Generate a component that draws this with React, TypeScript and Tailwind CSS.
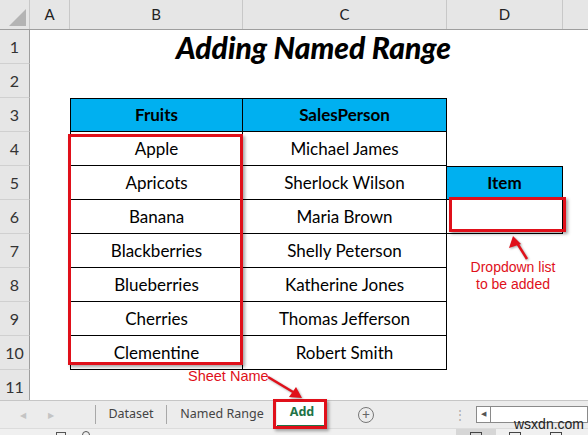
import React from "react";

const cols = ["A", "B", "C", "D"];
const colW = ["w-[40px]", "w-[173px]", "w-[204px]", "w-[116px]"];

const fruits = ["Apple", "Apricots", "Banana", "Blackberries", "Blueberries", "Cherries", "Clementine"];
const people = [
  "Michael James",
  "Sherlock Wilson",
  "Maria Brown",
  "Shelly Peterson",
  "Katherine Jones",
  "Thomas Jefferson",
  "Robert Smith",
];

const cellFont = { fontFamily: "Lato, 'Open Sans', sans-serif" };

function RowNum({ n, h = "h-[34px]" }: { n: number; h?: string }) {
  return (
    <div
      className={`w-[30px] ${h} shrink-0 bg-[#e6e6e6] border-r border-r-[#9e9e9e] border-b border-b-[#d0d0d0] flex items-center justify-center text-[16px] text-[#333]`}
      style={cellFont}
    >
      {n}
    </div>
  );
}

function Row({ n, children }: { n: number; children?: React.ReactNode }) {
  return (
    <div className="flex h-[34px]">
      <RowNum n={n} />
      {children}
    </div>
  );
}

export default function App() {
  return (
    <div className="relative w-[588px] h-[435px] overflow-hidden bg-white text-black" style={cellFont}>
      {/* column headers */}
      <div className="flex h-[30px] bg-[#e6e6e6] border-b border-b-[#9e9e9e]">
        <div className="relative w-[30px] shrink-0 border-r border-r-[#c8c8c8]">
          <div className="absolute right-[3px] bottom-[3px] w-0 h-0 border-l-[17px] border-l-transparent border-b-[17px] border-b-[#b4b4b4]" />
        </div>
        {cols.map((c, i) => (
          <div
            key={c}
            className={`${colW[i]} shrink-0 border-r border-r-[#c8c8c8] flex items-center justify-center text-[15px] text-[#222]`}
          >
            {c}
          </div>
        ))}
        <div className="flex-1" />
      </div>

      {/* row 1: title */}
      <Row n={1}>
        <div className="w-[40px]" />
        <div className="w-[493px] flex items-center justify-center pr-[6px]">
          <span className="text-[30px] font-black italic leading-none">Adding Named Range</span>
        </div>
      </Row>
      <Row n={2} />

      {/* row 3: table header */}
      <Row n={3}>
        <div className="w-[40px]" />
        <div className="w-[173px] bg-[#00b0f0] border border-black flex items-center justify-center text-[17px] font-bold">
          Fruits
        </div>
        <div className="w-[204px] bg-[#00b0f0] border-y border-r border-black flex items-center justify-center text-[17px] font-bold">
          SalesPerson
        </div>
      </Row>

      {fruits.map((f, i) => (
        <Row key={f} n={i + 4}>
          <div className="w-[40px]" />
          <div className="w-[173px] border-x border-b border-black flex items-center justify-center text-[17px]">
            {f}
          </div>
          <div className="w-[204px] border-r border-b border-black flex items-center justify-center text-[17px]">
            {people[i]}
          </div>
          {i === 0 && <div className="w-[116px]" />}
          {i === 1 && (
            <div className="w-[116px] bg-[#00b0f0] border-y border-r border-black flex items-center justify-center text-[17px] font-bold">
              Item
            </div>
          )}
          {i === 2 && <div className="w-[116px] border-r border-b border-black" />}
        </Row>
      ))}

      <div className="flex h-[31px]">
        <RowNum n={11} h="h-[34px]" />
      </div>

      {/* sheet tabs */}
      <div
        className="absolute left-0 top-[400px] w-full h-[28px] bg-[#ececec] border-t border-t-[#c6c6c6] flex items-center text-[12.5px] text-[#444]"
        style={{ fontFamily: "'Noto Sans', 'Open Sans', sans-serif" }}
      >
        <div className="w-[95px] flex items-center gap-[22px] pl-[20px] text-[#c4c4c4] text-[8px]">
          <span>◀</span>
          <span>▶</span>
        </div>
        <div className="w-px h-[19px] bg-[#a8a8a8]" />
        <div className="w-[70px] text-center">Dataset</div>
        <div className="w-px h-[19px] bg-[#a8a8a8]" />
        <div className="w-[110px] text-center">Named Range</div>
        <div className="w-[50px] h-[26px] mt-[-2px] bg-white flex items-center justify-center text-[#217346] font-bold border-b-2 border-b-[#217346]">
          Add
        </div>
        <div className="ml-[31px] w-[16px] h-[16px] rounded-full border border-[#777] flex items-center justify-center text-[#666] text-[14px] leading-none">
          +
        </div>
        <div className="ml-[80px] text-[#aaa] text-[12px] leading-none">⋮</div>
        <div className="ml-[10px] flex-1 h-[17px] bg-white border border-[#8a8a8a] flex">
          <div className="w-[14px] border-r border-r-[#8a8a8a] flex items-center justify-center text-[7px] text-[#555]">
            ◀
          </div>
        </div>
      </div>

      {/* status bar */}
      <div className="absolute left-0 top-[428px] w-full h-[7px] bg-[#f0f0f0] border-t border-t-[#dcdcdc]">
        <div className="absolute left-[56px] top-[3px] w-[10px] h-[6px] border border-[#555]" />
        <div className="absolute left-[82px] top-[2px] w-[8px] h-[6px] border border-[#555] rounded-t-sm" />
        <div className="absolute left-[456px] top-0 w-[40px] h-[7px] bg-[#d6d6d6]" />
        <div className="absolute left-[470px] top-[3px] w-[12px] h-[6px] border border-[#444]" />
        <div className="absolute left-[509px] top-[3px] w-[12px] h-[6px] border border-[#444]" />
        <div className="absolute left-[550px] top-[3px] w-[12px] h-[6px] border border-[#444]" />
      </div>

      {/* watermark */}
      <div
        className="absolute left-[514px] top-[417px] text-[14px] text-[#222] leading-none"
        style={{ fontFamily: "'Liberation Sans', Arial, sans-serif" }}
      >
        wsxdn.com
      </div>

      {/* red annotation boxes */}
      <div className="absolute left-[68px] top-[134px] w-[175px] h-[231px] border-[3px] border-[#e0101a] shadow-[2px_2px_3px_rgba(0,0,0,0.35)]" />
      <div className="absolute left-[449px] top-[197px] w-[117px] h-[35px] border-[3px] border-[#e0101a] shadow-[2px_2px_3px_rgba(0,0,0,0.35)]" />
      <div className="absolute left-[273px] top-[399px] w-[54px] h-[30px] border-[3px] border-[#e0101a] shadow-[2px_2px_3px_rgba(0,0,0,0.35)]" />

      {/* arrows */}
      <svg className="absolute left-0 top-0" width="588" height="435" style={{ filter: "drop-shadow(1px 1px 1px rgba(0,0,0,0.35))" }}>
        <line x1="527" y1="259" x2="517" y2="243" stroke="#e0101a" strokeWidth="2.5" />
        <polygon points="513,236 509,248 521,244" fill="#e0101a" />
        <line x1="268" y1="377" x2="293" y2="392" stroke="#e0101a" strokeWidth="2.5" />
        <polygon points="302,398 289,397 296,387" fill="#e0101a" />
      </svg>

      {/* red labels */}
      <div
        className="absolute left-[188px] top-[369px] text-[14.5px] text-[#e0101a] leading-none"
        style={{ fontFamily: "'Liberation Sans', Arial, sans-serif" }}
      >
        Sheet Name
      </div>
      <div
        className="absolute left-[453px] top-[259px] w-[120px] text-center text-[14px] leading-[17px] text-[#e0101a]"
        style={{ fontFamily: "'Liberation Sans', Arial, sans-serif" }}
      >
        Dropdown list
        <br />
        to be added
      </div>
    </div>
  );
}
